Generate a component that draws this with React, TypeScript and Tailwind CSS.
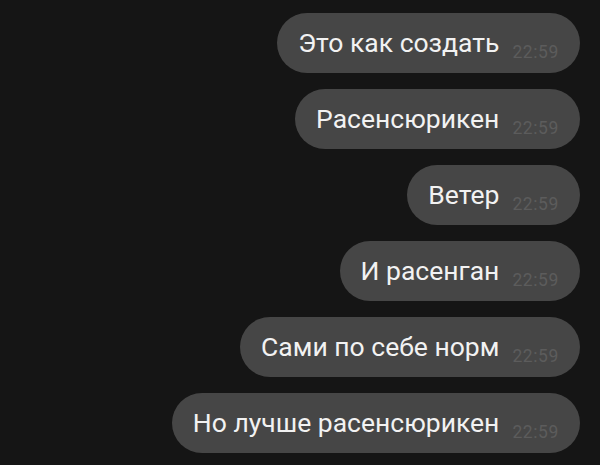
const messages = [
  'Это как создать',
  'Расенсюрикен',
  'Ветер',
  'И расенган',
  'Сами по себе норм',
  'Но лучше расенсюрикен',
];

function Bubble({ text }: { text: string }) {
  return (
    <div className="flex h-[60px] items-center rounded-full bg-[#464646] pl-[21px] pr-[21px]">
      <span className="text-[26.5px] leading-none text-[#f2f2f2]">{text}</span>
      <span className="ml-[13px] mt-[20px] text-[17.5px] leading-none tracking-[0.6px] text-[#5c5c5c]">22:59</span>
    </div>
  );
}

export default function App() {
  return (
    <div
      className="flex h-[465px] w-[600px] flex-col items-end gap-[16px] overflow-hidden bg-[#151515] pr-[20px] pt-[13px]"
      style={{ fontFamily: 'Roboto, "Liberation Sans", sans-serif' }}
    >
      {messages.map((m) => (
        <Bubble key={m} text={m} />
      ))}
    </div>
  );
}
